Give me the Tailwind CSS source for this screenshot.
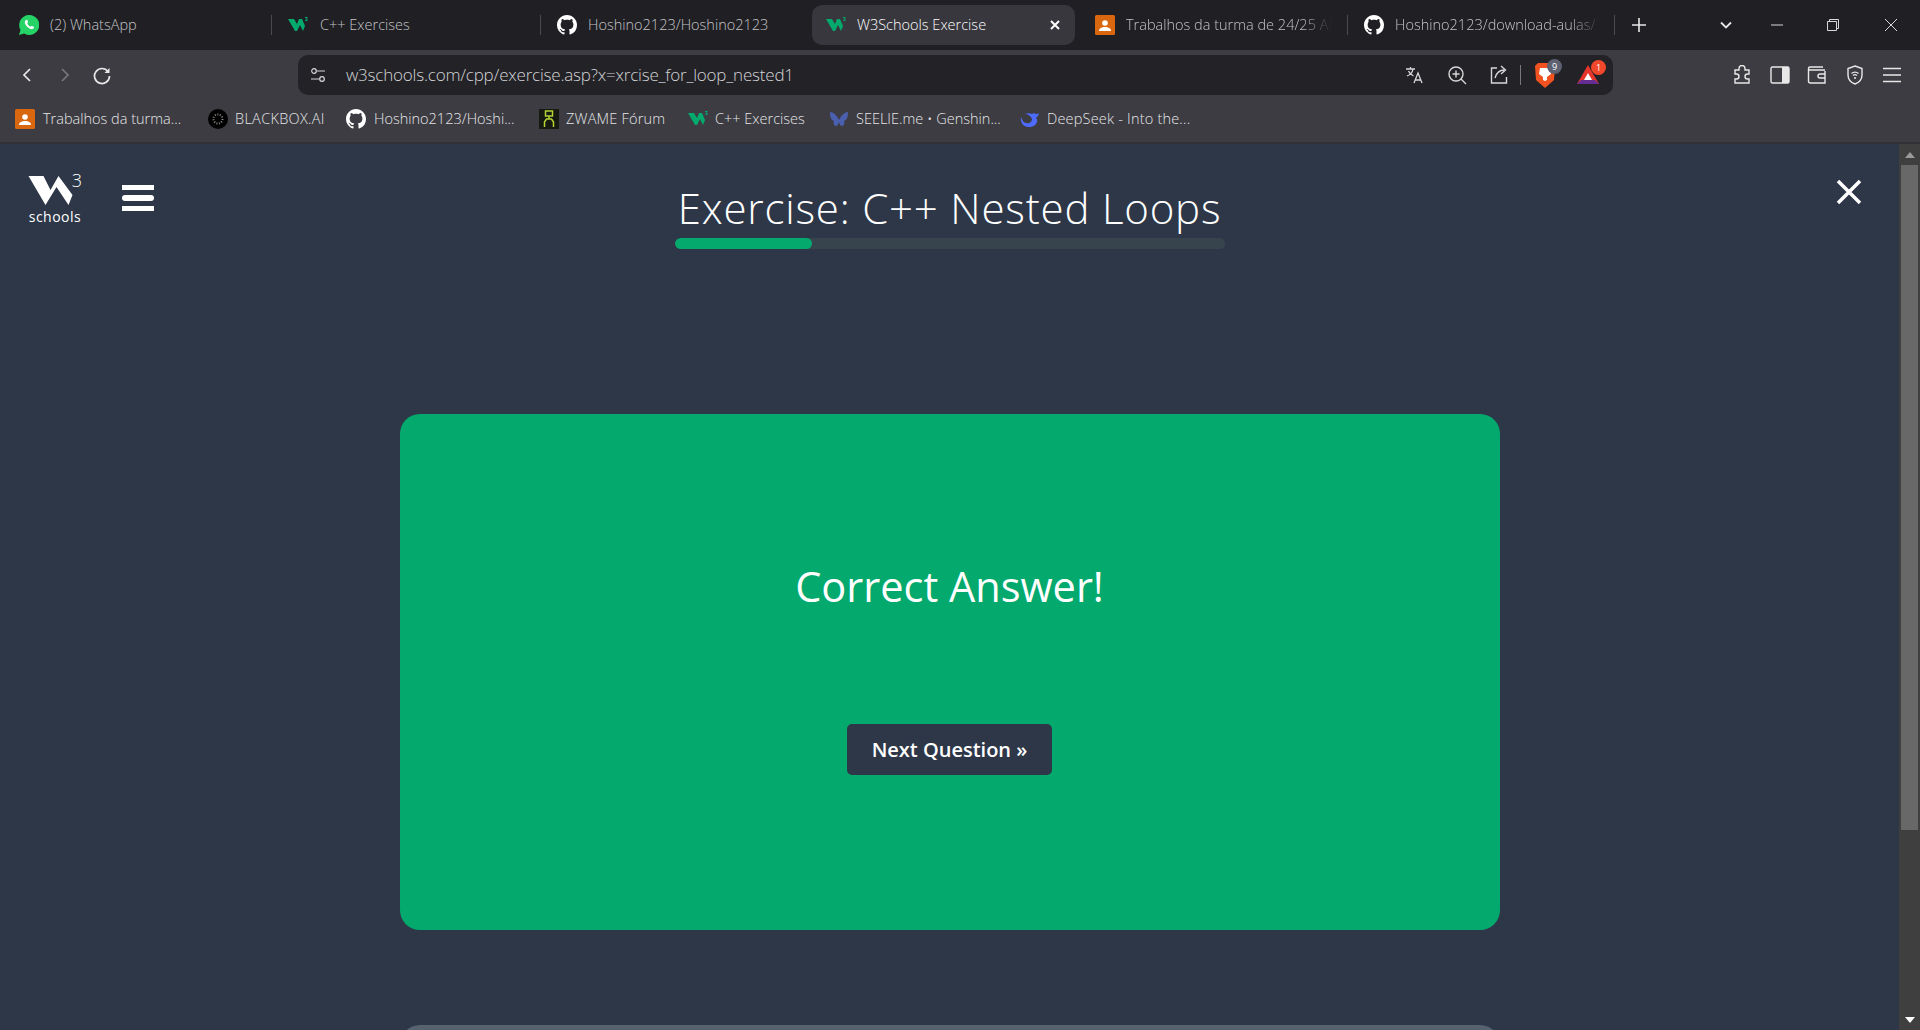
<!DOCTYPE html>
<html lang="en">
<head>
  <meta charset="UTF-8">
  <title>W3Schools Exercise</title>
  <script src="https://cdn.jsdelivr.net/npm/@tailwindcss/browser@4"></script>
</head>
<body class="h-[1030px] w-[1920px] overflow-hidden bg-[#2d3748] font-['Open_Sans',sans-serif] text-white">
  <svg class="hidden">
    <symbol id="w3" viewBox="0 0 20 20">
      <path d="M0 4h6l3 5 2-5h3l3 7-2 5-3-6-3 6h-2z" fill="#04aa6d"/>
      <path d="M17 2h2.500v1l-1 1h1v2h-2.500v-.7h1.600v-.7h-1v-.7l.9-.9h-1.500z" fill="#04aa6d"/>
    </symbol>
    <symbol id="gh" viewBox="0 0 16 16">
      <path fill="#fff" d="M8 0C3.580 0 0 3.580 0 8c0 3.540 2.290 6.530 5.470 7.590.4.070.55-.17.55-.38 0-.19-.01-.82-.01-1.490-2.010.37-2.530-.49-2.690-.94-.09-.23-.48-.94-.82-1.130-.28-.15-.68-.52-.01-.53.630-.01 1.080.58 1.230.82.720 1.210 1.870.87 2.330.66.070-.52.280-.87.510-1.070-1.780-.2-3.640-.89-3.640-3.950 0-.87.310-1.590.820-2.150-.08-.2-.36-1.020.08-2.120 0 0 .67-.21 2.200.820.640-.18 1.320-.27 2-.27s1.360.09 2 .27c1.530-1.040 2.200-.82 2.200-.82.440 1.100.16 1.920.08 2.120.51.560.82 1.270.82 2.150 0 3.070-1.870 3.750-3.650 3.950.29.250.54.730.54 1.480 0 1.070-.01 1.930-.01 2.200 0 .210.150.460.550.380A8.010 8.010 0 0 0 16 8c0-4.420-3.580-8-8-8z"/>
    </symbol>
    <symbol id="classroom" viewBox="0 0 20 20">
      <rect width="20" height="20" rx="1.500" fill="#d9670f"/>
      <circle cx="10" cy="8" r="2.800" fill="#fff"/>
      <path d="M4 16c0-3 3-4 6-4s6 1 6 4z" fill="#fff"/>
    </symbol>
  </svg>

  <!-- tab strip -->
  <div class="flex h-[50px] items-center bg-[#1f1f24] pl-[5px] text-[14.5px] font-light text-[#c4c4c6]">
    <div class="flex h-[40px] w-[263px] items-center gap-[11px] pl-[14px]">
      <svg class="size-5" viewBox="0 0 20 20"><path d="M10 0a10 10 0 0 0-8.500 15L0 20l5.200-1.400A10 10 0 1 0 10 0z" fill="#25d366"/><path d="M7 5c-1 .5-1.500 2-1 3.500 1 2.500 3 4.500 5.500 5.500 1.500.5 3-.2 3.500-1.300l-.3-1-2-1-1 1c-1.500-.5-3-2-3.500-3.500l1-1-1-2.500z" fill="#fff"/></svg>
      <span>(2) WhatsApp</span>
    </div>
    <div class="flex w-[6px] justify-center"><div class="h-[20px] w-px bg-[#4a4a50]"></div></div>
    <div class="flex h-[40px] w-[263px] items-center gap-[12px] pl-[14px]">
      <svg class="size-5"><use href="#w3"/></svg>
      <span>C++ Exercises</span>
    </div>
    <div class="flex w-[6px] justify-center"><div class="h-[20px] w-px bg-[#4a4a50]"></div></div>
    <div class="flex h-[40px] w-[263px] items-center gap-[11px] pl-[14px]">
      <svg class="size-5"><use href="#gh"/></svg>
      <span>Hoshino2123/Hoshino2123</span>
    </div>
    <div class="w-[6px]"></div>
    <div class="flex h-[40px] w-[263px] items-center gap-[11px] rounded-[10px] bg-[#37373d] pl-[14px] text-white">
      <svg class="size-5"><use href="#w3"/></svg>
      <span class="flex-1">W3Schools Exercise</span>
      <svg class="mr-[14px] size-3" viewBox="0 0 12 12"><path d="M2 2l8 8M10 2l-8 8" stroke="#fff" stroke-width="2"/></svg>
    </div>
    <div class="w-[6px]"></div>
    <div class="flex h-[40px] w-[263px] items-center gap-[11px] overflow-hidden pl-[14px]">
      <svg class="size-5 shrink-0"><use href="#classroom"/></svg>
      <span class="w-[206px] overflow-hidden whitespace-nowrap [mask-image:linear-gradient(to_right,#000_85%,transparent)]">Trabalhos da turma de 24/25 AE</span>
    </div>
    <div class="flex w-[6px] justify-center"><div class="h-[20px] w-px bg-[#4a4a50]"></div></div>
    <div class="flex h-[40px] w-[264px] items-center gap-[11px] overflow-hidden pl-[14px]">
      <svg class="size-5 shrink-0"><use href="#gh"/></svg>
      <span class="w-[206px] overflow-hidden whitespace-nowrap [mask-image:linear-gradient(to_right,#000_85%,transparent)]">Hoshino2123/download-aulas/</span>
    </div>
    <div class="h-[20px] w-px bg-[#4a4a50]"></div>
    <svg class="ml-[17px] size-[14px]" viewBox="0 0 14 14"><path d="M7 0v14M0 7h14" stroke="#e8e8e8" stroke-width="1.600"/></svg>
    <svg class="ml-[73px] size-[14px]" viewBox="0 0 14 14"><path d="M2 4.500l5 5 5-5" fill="none" stroke="#e8e8e8" stroke-width="1.800"/></svg>
    <svg class="ml-[37px] size-[14px]" viewBox="0 0 14 14"><path d="M1 7h12" stroke="#d8d8d8"/></svg>
    <svg class="ml-[42px] size-[14px]" viewBox="0 0 14 14"><path d="M1.500 3.500h9v9h-9zM3.500 3.500v-2h9v9h-2" fill="none" stroke="#d8d8d8"/></svg>
    <svg class="ml-[44px] size-[14px]" viewBox="0 0 14 14"><path d="M1 1l12 12M13 1L1 13" stroke="#d8d8d8"/></svg>
  </div>

  <!-- toolbar -->
  <div class="flex h-[45px] items-start bg-[#3c3c42] pt-[5px]">
    <div class="flex h-[40px] w-[298px] items-center">
      <svg class="ml-[20px] size-[14px]" viewBox="0 0 14 14"><path d="M10 1L4 7l6 6" fill="none" stroke="#e8e8e8" stroke-width="1.700"/></svg>
      <svg class="ml-[24px] size-[14px]" viewBox="0 0 14 14"><path d="M4 1l6 6-6 6" fill="none" stroke="#77777c" stroke-width="1.700"/></svg>
      <svg class="ml-[20px] size-5" viewBox="0 0 20 20"><path d="M16 6.500A7.500 7.500 0 1 0 17.500 11" fill="none" stroke="#e8e8e8" stroke-width="1.700"/><path d="M17.500 3v5h-5z" fill="#e8e8e8"/></svg>
    </div>
    <div class="flex h-[40px] w-[1315px] items-center rounded-[10px] bg-[#222227] pr-[14px]">
      <svg class="ml-[12px] size-4 shrink-0" viewBox="0 0 16 16"><circle cx="4" cy="4" r="2.300" fill="none" stroke="#d8d8d8" stroke-width="1.200"/><circle cx="12" cy="12" r="2.300" fill="none" stroke="#d8d8d8" stroke-width="1.200"/><path d="M7 4h8M1 12h8" stroke="#d8d8d8" stroke-width="1.200"/></svg>
      <span class="ml-[20px] flex-1 text-[17px] font-light tracking-[-0.2px] text-[#d4d4d6]">w3schools.com/cpp/exercise.asp?x=xrcise_for_loop_nested1</span>
      <svg class="size-5" viewBox="0 0 20 20"><path d="M1 4h9M5.500 2v2M8 4c-.5 3-3 6-6 7M3.500 6c1 2.500 3 4 5 5M9 18l4-10 4 10M10.500 15h5" fill="none" stroke="#d8d8d8" stroke-width="1.300"/></svg>
      <svg class="ml-[22px] size-5" viewBox="0 0 20 20"><circle cx="9" cy="9" r="7" fill="none" stroke="#d8d8d8" stroke-width="1.400"/><path d="M14 14l5 5M9 5.500v7M5.500 9h7" stroke="#d8d8d8" stroke-width="1.400"/></svg>
      <svg class="ml-[23px] size-5" viewBox="0 0 20 20"><path d="M7 3H1.500v15h15v-6M5 13c1-5 5-8 9-8M11 1l4.500 4L11 9" fill="none" stroke="#d8d8d8" stroke-width="1.400"/></svg>
      <div class="ml-[10px] h-[20px] w-px bg-[#77777c]"></div>
      <div class="relative ml-[14px] h-[26px] w-[20px]">
        <svg class="h-[26px] w-[20px]" viewBox="0 0 20 26"><path d="M3 1h14l3 3-1 14-9 8-9-8L0 4z" fill="#f1521f"/><path d="M5 6h10l1 6-4 3v3l-2 1-2-1v-3L4 12z" fill="#fff"/></svg>
        <span class="absolute right-[-7px] top-[-3px] flex size-[15px] items-center justify-center rounded-full bg-[#5e6172] text-[9px]">9</span>
      </div>
      <div class="relative ml-[22px] size-[22px]">
        <svg class="size-[22px]" viewBox="0 0 22 22"><path d="M11 1l11 19H0z" fill="#e6352c"/><path d="M0 20l4-4h14l4 4z" fill="#662d91"/><path d="M11 9l4 7H7z" fill="#fff"/></svg>
        <span class="absolute right-[-7px] top-[-4px] flex size-[15px] items-center justify-center rounded-full bg-[#f1472b] text-[9px]">1</span>
      </div>
    </div>
    <div class="flex h-[40px] items-center pl-[119px]">
      <svg class="size-5" viewBox="0 0 20 20"><path d="M7 3.500a3 3 0 0 1 6 0V5h4v4h-1.500a2.500 2.500 0 0 0 0 5H17v4H3v-4h1.500a2.500 2.500 0 0 0 0-5H3V5h4z" fill="none" stroke="#e8e8e8" stroke-width="1.400"/></svg>
      <svg class="ml-[18px] size-5" viewBox="0 0 20 20"><rect x="1" y="2" width="18" height="16" rx="1.500" fill="none" stroke="#e8e8e8" stroke-width="1.400"/><rect x="12" y="2" width="7" height="16" fill="#e8e8e8"/></svg>
      <svg class="ml-[17px] size-5" viewBox="0 0 20 20"><path d="M18 5H3a1.500 1.500 0 0 1 0-3h13M1.500 4v12a2 2 0 0 0 2 2h14.500V6M18 9h-5a2 2 0 0 0 0 4h5" fill="none" stroke="#e8e8e8" stroke-width="1.400"/></svg>
      <svg class="ml-[18px] size-5" viewBox="0 0 20 20"><path d="M10 1l7 2.500V10c0 4.500-3 7.500-7 9-4-1.500-7-4.500-7-9V3.500z" fill="none" stroke="#e8e8e8" stroke-width="1.400"/><path d="M6.500 8.500a5 5 0 0 1 7 0M8 10.500a3 3 0 0 1 4 0" fill="none" stroke="#e8e8e8" stroke-width="1.200"/><circle cx="10" cy="13" r="1" fill="#e8e8e8"/></svg>
      <svg class="ml-[17px] size-5" viewBox="0 0 20 20"><path d="M1 3.500h18M1 10h18M1 16.500h18" stroke="#e8e8e8" stroke-width="1.500"/></svg>
    </div>
  </div>

  <!-- bookmarks -->
  <div class="flex h-[49px] items-center border-b-2 border-[#313136] bg-[#3c3c42] pt-[1px] pl-[15px] text-[14.5px] font-light text-[#e6e6e8]">
    <div class="flex w-[193px] items-center gap-[8px]"><svg class="size-5"><use href="#classroom"/></svg><span>Trabalhos da turma...</span></div>
    <div class="flex w-[138px] items-center gap-[7px]"><svg class="size-5" viewBox="0 0 20 20"><circle cx="10" cy="10" r="10" fill="#000"/><circle cx="10" cy="10" r="4.500" fill="none" stroke="#888" stroke-dasharray="1 1.500" stroke-width="2"/></svg><span class="tracking-[0.3px]">BLACKBOX.AI</span></div>
    <div class="flex w-[193px] items-center gap-[8px]"><svg class="size-5"><use href="#gh"/></svg><span>Hoshino2123/Hoshi...</span></div>
    <div class="flex w-[149px] items-center gap-[7px]"><svg class="size-5" viewBox="0 0 20 20"><rect width="20" height="20" fill="#161a10"/><path d="M6.500 2h7v5h-7zM10 7v3M5.500 18v-5l2-3h5l2 3v5" fill="none" stroke="#b6d334" stroke-width="1.500"/></svg><span class="tracking-[0.2px]">ZWAME Fórum</span></div>
    <div class="flex w-[141px] items-center gap-[7px]"><svg class="size-5"><use href="#w3"/></svg><span>C++ Exercises</span></div>
    <div class="flex w-[191px] items-center gap-[7px]"><svg class="size-5" viewBox="0 0 20 20"><path d="M1 3c4 0 7 4 9 8 2-4 5-8 9-8 0 5-1 8-4 9 1 2 0 5-2 5-1.500 0-2.500-2-3-4-.5 2-1.500 4-3 4-2 0-3-3-2-5-3-1-4-4-4-9z" fill="#4a5fae"/></svg><span>SEELIE.me • Genshin...</span></div>
    <div class="flex items-center gap-[7px]"><svg class="size-5" viewBox="0 0 20 20"><path d="M19 4c-1 1-2 1-3 1-1-1-3-1-4 0-2-1-5-1-7 0 3 0 6 2 7 5 0 3-3 5-6 4-2 0-4-3-5-6-1 5 2 10 8 10 4 0 7-2 8-5 .5-2 0-3-1-4 1-1 3-3 3-5z" fill="#4d6bfe"/></svg><span class="tracking-[0.2px]">DeepSeek - Into the...</span></div>
  </div>

  <!-- page -->
  <div class="flex h-[886px]">
    <main class="h-full flex-1 overflow-hidden">
      <header class="grid h-[270px] grid-cols-[1fr_550px_1fr]">
        <div class="flex items-start pl-[28px] pt-[28px]">
          <div class="w-[54px]">
            <div class="relative h-[39px]">
              <svg class="absolute left-0 top-[4px] h-[29px] w-[45px]" viewBox="0 0 44 29"><path d="M0 0h15l7 14 8-14 14 19-4 10-12-18-11 18z" fill="#fff"/></svg>
              <span class="absolute right-0 top-[-2px] text-[18px] font-light leading-[20px]">3</span>
            </div>
            <div class="-mt-[2px] text-center text-[14px] font-medium leading-[16px] tracking-[0.5px]">schools</div>
          </div>
          <div class="ml-[40px] mt-[13px] flex w-[32px] flex-col gap-[5px]">
            <div class="h-[5px] bg-white"></div>
            <div class="h-[6px] rounded-full bg-white"></div>
            <div class="h-[5px] bg-white"></div>
          </div>
        </div>
        <div class="pt-[34px]">
          <h1 class="h-[60px] whitespace-nowrap text-center text-[42px] font-light leading-[60px] tracking-[0.8px]">Exercise: C++ Nested Loops</h1>
          <div class="h-[11px] overflow-hidden rounded-full bg-[#38444d]">
            <div class="h-full rounded-full bg-[#04aa6d]" style="width: 137px"></div>
          </div>
        </div>
        <div class="flex justify-end pr-[37px] pt-[35px]">
          <svg class="size-[26px]" viewBox="0 0 26 26"><path d="M2 2l22 22M24 2L2 24" stroke="#fff" stroke-width="3.500"/></svg>
        </div>
      </header>

      <section class="mx-auto flex h-[516px] w-[1100px] flex-col items-center rounded-[20px] bg-[#04aa6d]">
        <div class="mt-[142px] text-[41.5px] leading-[60px]">Correct Answer!</div>
        <button class="mt-[108px] flex h-[51px] w-[205px] items-center justify-center rounded-[5px] bg-[#2d3748] text-[20px] font-semibold">Next Question »</button>
      </section>

      <div class="mx-auto mt-[95px] h-[40px] w-[1100px] rounded-[20px] bg-[#566270]"></div>
    </main>

    <aside class="flex w-[21px] flex-col items-center bg-[#3f3f3f]">
      <div class="flex h-[21px] items-center justify-center">
        <svg class="h-[6px] w-[10px]" viewBox="0 0 10 6"><path d="M5 0l5 6H0z" fill="#9a9a9a"/></svg>
      </div>
      <div class="h-[665px] w-[17px] bg-[#686868]"></div>
      <div class="flex-1"></div>
      <div class="flex h-[21px] items-center justify-center">
        <svg class="h-[6px] w-[10px]" viewBox="0 0 10 6"><path d="M5 6L10 0H0z" fill="#fff"/></svg>
      </div>
    </aside>
  </div>
</body>
</html>
